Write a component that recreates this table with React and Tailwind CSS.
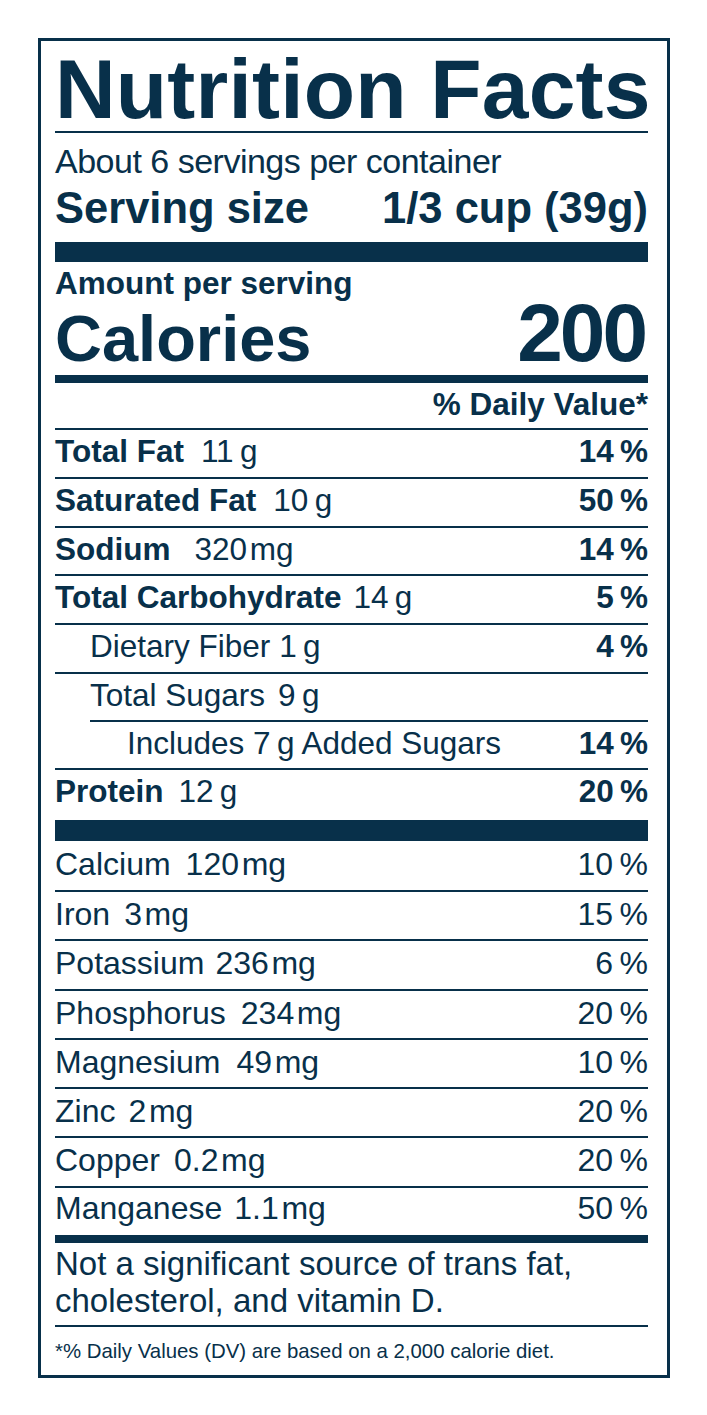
import React from "react";

function NRow({ label, value, gap, dv, h, indent = 0, bold = true, border = true, boxIndent = 0 }) {
  return (
    <div
      className={`flex justify-between whitespace-nowrap text-[31.5px] leading-[43px] ${border ? "border-b-[2px] border-[#08304a]" : ""}`}
      style={{ height: h, marginLeft: boxIndent, paddingLeft: indent }}
    >
      <span>
        <span className={bold ? "font-bold" : "font-normal"}>{label}</span>
        {value && (
          <span className="font-normal" style={{ marginLeft: gap }}>
            {value}
          </span>
        )}
      </span>
      {dv && <span className="font-bold">{dv}</span>}
    </div>
  );
}

function MRow({ label, value, gap, dv, h, border = true, lh = 44 }) {
  return (
    <div
      className={`flex justify-between whitespace-nowrap text-[32px] ${border ? "border-b-[2px] border-[#08304a]" : ""}`}
      style={{ height: h, lineHeight: `${lh}px` }}
    >
      <span>
        <span>{label}</span>
        <span style={{ marginLeft: gap }}>{value}</span>
      </span>
      <span>{dv}</span>
    </div>
  );
}

export default function App() {
  return (
    <div className="min-h-[1415px] w-[707px] bg-white pt-[38px] pl-[38px] font-['Liberation_Sans',Arial,sans-serif] text-[#08304a]">
      <div className="w-[632px] border-[3px] border-[#08304a] pl-[14px] pr-[19px] pt-[8px] pb-[9px]">
        <div className="h-[80px] whitespace-nowrap text-[84px] font-bold leading-[80px] tracking-[0.2px]">Nutrition Facts</div>
        <div className="mt-[2px] h-[1.5px] bg-[#08304a]" />
        <div className="mt-[8px] h-[40px] whitespace-nowrap text-[34px] leading-[40px] tracking-[-0.5px]">
          About 6 servings per container
        </div>
        <div className="mt-[7.5px] flex h-[40px] justify-between whitespace-nowrap text-[43.5px] font-bold leading-[40px]">
          <span>Serving size</span>
          <span>1/3 cup (39g)</span>
        </div>
        <div className="mt-[14px] h-[20px] bg-[#08304a]" />
        <div className="mt-[6px] h-[30px] whitespace-nowrap text-[31.5px] font-bold leading-[30px]">Amount per serving</div>
        <div className="flex h-[70px] items-baseline justify-between whitespace-nowrap font-bold">
          <span className="text-[65px] leading-[70px]">Calories</span>
          <span className="mr-[3px] text-[82px] leading-[70px] tracking-[-3px]">200</span>
        </div>
        <div className="mt-[7px] h-[8px] bg-[#08304a]" />
        <div className="h-[47px] border-b-[2px] border-[#08304a] pt-[3px] text-right text-[31.5px] font-bold leading-[36px] whitespace-nowrap">
          % Daily Value*
        </div>
        <NRow label="Total Fat" value={"11\u2009g"} gap={17} dv={"14\u2009%"} h={49} />
        <NRow label="Saturated Fat" value={"10\u2009g"} gap={17} dv={"50\u2009%"} h={49} />
        <NRow label="Sodium" value={"320\u200amg"} gap={24} dv={"14\u2009%"} h={48} />
        <NRow label="Total Carbohydrate" value={"14\u2009g"} gap={12} dv={"5\u2009%"} h={49} />
        <NRow label="Dietary Fiber" value={"1\u2009g"} gap={9} dv={"4\u2009%"} h={49} indent={35} bold={false} />
        <NRow label="Total Sugars" value={"9\u2009g"} gap={13} h={48} boxIndent={35} bold={false} />
        <NRow label={"Includes 7\u2009g Added Sugars"} dv={"14\u2009%"} h={48} indent={72} bold={false} />
        <NRow label="Protein" value={"12\u2009g"} gap={15} dv={"20\u2009%"} h={50} border={false} />
        <div className="h-[21px] bg-[#08304a]" />
        <MRow label="Calcium" value={"120\u200amg"} gap={15} dv={"10\u2009%"} h={51} lh={46} />
        <MRow label="Iron" value={"3\u200amg"} gap={14} dv={"15\u2009%"} h={49} />
        <MRow label="Potassium" value={"236\u200amg"} gap={11} dv={"6\u2009%"} h={50} />
        <MRow label="Phosphorus" value={"234\u200amg"} gap={15} dv={"20\u2009%"} h={49} />
        <MRow label="Magnesium" value={"49\u200amg"} gap={16} dv={"10\u2009%"} h={49} />
        <MRow label="Zinc" value={"2\u200amg"} gap={13} dv={"20\u2009%"} h={49} />
        <MRow label="Copper" value={"0.2\u200amg"} gap={14} dv={"20\u2009%"} h={50} />
        <MRow label="Manganese" value={"1.1\u200amg"} gap={12} dv={"50\u2009%"} h={47} border={false} lh={40} />
        <div className="h-[8px] bg-[#08304a]" />
        <div className="mt-[2px] text-[33px] leading-[37px]">
          Not a significant source of trans fat,
          <br />
          cholesterol, and vitamin D.
        </div>
        <div className="mt-[6px] h-[2px] bg-[#08304a]" />
        <div className="mt-[9px] whitespace-nowrap text-[20.4px] leading-[30px]">
          *% Daily Values (DV) are based on a 2,000 calorie diet.
        </div>
      </div>
    </div>
  );
}
